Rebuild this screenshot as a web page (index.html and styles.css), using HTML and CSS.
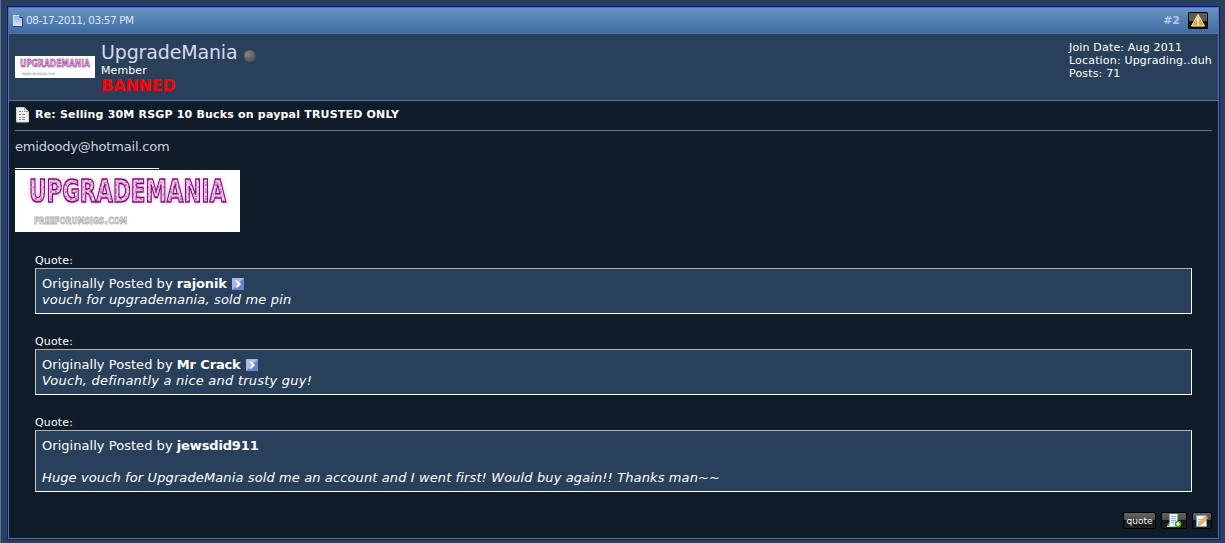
FILE: index.html
```html
<!DOCTYPE html>
<html lang="en">
<head>
<meta charset="UTF-8">
<meta name="viewport" content="width=device-width, initial-scale=1.0">
<title>Selling 30M RSGP 10 Bucks on paypal TRUSTED ONLY</title>
<link rel="stylesheet" href="styles.css">
</head>
<body>
<div class="post">

  <!-- Date and post number -->
  <div class="post-head">
    <svg class="icon-old" width="10" height="12" viewBox="0 0 10 12">
      <defs>
        <linearGradient id="page" x2="0" y2="1">
          <stop offset="0" stop-color="#8fa9df"/>
          <stop offset="1" stop-color="#dce5fb"/>
        </linearGradient>
      </defs>
      <path d="M0 0h7l2 2.500V11H0z" fill="url(#page)"/>
      <path d="M.5 11V.5h6" fill="none" stroke="#dfe8fb"/>
      <path d="M7 0v2.500h2.500V11.500H0" fill="none" stroke="#2b4078"/>
    </svg>
    <span class="date">08-17-2011, 03:57 PM</span>
    <span class="number">#<b>2</b></span>
    <svg class="icon-report" width="20" height="17" viewBox="0 0 20 17">
      <rect width="20" height="17" rx="1.500" fill="#000"/>
      <path d="M1 1h18v8H1z" fill="#5c5c5c"/>
      <path d="M1 9h18v7H1z" fill="#151515"/>
      <path d="M10 2.500L16.500 14h-13z" fill="#dfa63a" stroke="#fff0bd" stroke-linejoin="round"/>
      <path d="M10 5.500v5M10 11.500v1.500" stroke="#fffbe8" stroke-width="1.800"/>
    </svg>
  </div>

  <!-- User info -->
  <div class="user">
    <svg class="avatar" viewBox="0 0 225 62" preserveAspectRatio="none">
      <rect width="225" height="62" fill="#fff"/>
      <text class="sig-name" x="14" y="32" textLength="197" lengthAdjust="spacingAndGlyphs">UPGRADEMANIA</text>
      <text class="sig-site" x="19" y="54" textLength="93" lengthAdjust="spacingAndGlyphs">freeforumsigs.com</text>
    </svg>
    <div class="user-name">
      <div class="name"><span class="name-text">UpgradeMania</span><span class="offline"></span></div>
      <div class="rank">Member</div>
      <div class="banned">BANNED</div>
    </div>
    <div class="user-stats">
      <div>Join Date: Aug 2011</div>
      <div>Location: Upgrading..duh</div>
      <div>Posts: 71</div>
    </div>
  </div>

  <!-- Message -->
  <div class="message">
    <div class="title">
      <svg width="14" height="16" viewBox="0 0 14 16">
        <path d="M1.500.500h8l4 4v10.500h-12z" fill="#f1f1ec" stroke="#cfcfc9"/>
        <path d="M9.500.5v4h4z" fill="#fff" stroke="#a3a39e"/>
        <path d="M4 4.500h4M4 7.500h7M4 10.500h7M4 12.500h7" stroke="#85857f" stroke-dasharray="2 1 3 1"/>
      </svg>
      <span class="title-text">Re: Selling 30M RSGP 10 Bucks on paypal TRUSTED ONLY</span>
    </div>
    <div class="text">emidoody@hotmail.com</div>

    <div class="sig-line"></div>
    <svg class="signature" width="225" height="62" viewBox="0 0 225 62">
      <defs>
        <pattern id="speckle" width="5" height="7" patternUnits="userSpaceOnUse">
          <rect width="5" height="7" fill="#f3b3f3"/>
          <path d="M1 0v2M3 3h1M0 5h2" stroke="#9c3a90"/>
          <path d="M3 0v2M1 3v2" stroke="#fff"/>
        </pattern>
      </defs>
      <rect width="225" height="62" fill="#fff"/>
      <text class="sig-name glow" x="14" y="32" textLength="197" lengthAdjust="spacingAndGlyphs">UPGRADEMANIA</text>
      <text class="sig-site" x="19" y="54" textLength="93" lengthAdjust="spacingAndGlyphs">freeforumsigs.com</text>
    </svg>

    <div class="quote">
      <div class="quote-label">Quote:</div>
      <div class="quote-box">
        <div><span class="by">Originally Posted by <b>rajonik</b></span><svg class="view" width="12" height="12" viewBox="0 0 12 12"><rect width="12" height="12" fill="#6f84cf"/><path d="M0 12V0h12" fill="#a9b8e8"/><path d="M3 2.500h2.500L9 6 5.500 9.500H3L6 6z" fill="#fff"/></svg></div>
        <i class="q1">vouch for upgrademania, sold me pin</i>
      </div>
    </div>

    <div class="quote">
      <div class="quote-label">Quote:</div>
      <div class="quote-box">
        <div><span class="by">Originally Posted by <b>Mr Crack</b></span><svg class="view" width="12" height="12" viewBox="0 0 12 12"><rect width="12" height="12" fill="#6f84cf"/><path d="M0 12V0h12" fill="#a9b8e8"/><path d="M3 2.500h2.500L9 6 5.500 9.500H3L6 6z" fill="#fff"/></svg></div>
        <i class="q2">Vouch, definantly a nice and trusty guy!</i>
      </div>
    </div>

    <div class="quote">
      <div class="quote-label">Quote:</div>
      <div class="quote-box">
        <div><span class="by">Originally Posted by <b>jewsdid911</b></span></div>
        <br>
        <i class="q3">Huge vouch for UpgradeMania sold me an account and I went first! Would buy again!! Thanks man~~</i>
      </div>
    </div>

    <!-- Post controls -->
    <div class="controls">
      <span class="btn btn-quote">quote</span>
      <span class="btn btn-multi">
        <svg width="16" height="15" viewBox="0 0 16 15">
          <path d="M1 12l3-3v5H1z" fill="#55a867"/>
          <path d="M3.500 1h8v10l-1 2h-7z" fill="#e8f1fa"/>
          <path d="M5 3.500h5M5 5.500h5M5 7.500h5M5 9.500h3" stroke="#8db4dc"/>
          <path d="M1 13.500h10" stroke="#b8dbc0"/>
          <circle cx="12" cy="11" r="3.300" fill="#4ea32c"/>
          <path d="M12 9v4M10 11h4" stroke="#fff" stroke-width="1.200"/>
        </svg>
      </span>
      <span class="btn btn-edit">
        <svg width="14" height="14" viewBox="0 0 14 14">
          <path d="M1.500 1.500h10v11h-10z" fill="#eef5fd" stroke="#67a7dc"/>
          <path d="M3 5.500h4M3 7.500h3" stroke="#9cc4e6"/>
          <path d="M4 8.500L10 2.500l2.200 2.200-6 6-3 .8z" fill="#f3b552" stroke="#d58a2b" stroke-width=".6"/>
          <path d="M10 2.500l1-1 2 2-.9 1.200z" fill="#e9817b"/>
        </svg>
      </span>
    </div>
  </div>
</div>
</body>
</html>
```
FILE: styles.css
```css
* {
  box-sizing: border-box;
}

body {
  margin: 0;
  height: 543px;
  padding: 6px 5px 0 6px;
  border-left: 1px solid #5c7099;
  background-color: #29405a;
  color: #fff;
  font-family: "DejaVu Sans", Verdana, sans-serif;
  font-size: 13px;
  line-height: 16px;
  overflow: hidden;
}

svg {
  display: block;
  flex: none;
}

.post {
  height: 534px;
  border: 1px solid #0b198c;
  background-color: #0f1c2a;
  outline: 1px solid #5c7099;
  outline-offset: -2px;
  padding: 1px;
}

.post-head {
  display: flex;
  align-items: center;
  height: 26px;
  padding: 0 10px 0 4px;
  border-bottom: 1px solid #5c7099;
  background: linear-gradient(#6793c1, #3e6ca2);
  color: #dde5f2;
  font-size: 11px;
}

.icon-old {
  margin-top: 1px;
}

.date {
  margin: -2px auto 0 3px;
  font-size: 10.500px;
  letter-spacing: -0.45px;
}

.number {
  margin-right: 8px;
  color: #d4d4fb;
}

.number b {
  color: #c1bdf5;
}

.user {
  display: flex;
  height: 67px;
  padding: 6px;
  border-bottom: 1px solid #5c7099;
  background-color: #29405a;
}

.avatar {
  width: 80px;
  height: 22px;
  margin: 16px 6px 0 0;
}

.name {
  display: flex;
  height: 24px;
  color: #d8d8ee;
  font-size: 19px;
  line-height: 24px;
  letter-spacing: -0.15px;
}

.offline {
  width: 12px;
  height: 12px;
  margin: 10px 0 0 7px;
  border-radius: 50%;
  background: radial-gradient(circle at 4px 4px, #858585, #3c3c3c);
}

.rank {
  height: 13px;
  font-size: 11px;
  line-height: 13px;
  letter-spacing: 0.1px;
}

.banned {
  color: #f00;
  font-size: 16px;
  font-weight: bold;
  line-height: 17px;
  letter-spacing: -0.2px;
}

.user-stats {
  margin: 1px 0 0 auto;
  font-size: 11px;
  line-height: 13px;
  letter-spacing: 0.17px;
}

.message {
  padding: 6px;
}

.title {
  display: flex;
  height: 24px;
  border-bottom: 1px solid #5c7099;
  font-size: 11px;
  font-weight: bold;
}

.title-text {
  margin-left: 6px;
  line-height: 15px;
  letter-spacing: 0.19px;
}

.text {
  margin-top: 8px;
  color: #d1d1e1;
  letter-spacing: -0.2px;
}

.sig-line {
  width: 144px;
  height: 1px;
  margin: 13px 0 1px;
  background-color: #fff;
}

.sig-name {
  fill: url(#speckle);
  stroke: #75145f;
  stroke-width: 1.500px;
  font: bold 32px "DejaVu Sans", sans-serif;
}

.glow {
  filter: drop-shadow(0 0 2px #f3bdf3);
}

.sig-site {
  fill: #fff;
  stroke: #b0b0b0;
  stroke-width: 0.800px;
  font: bold small-caps 12px "DejaVu Sans", sans-serif;
}

.quote {
  margin: 20px 20px 0;
}

.quote + .quote {
  margin-top: 19px;
}

.quote-label {
  height: 16px;
  font-size: 11px;
  line-height: 17px;
  letter-spacing: 0.15px;
}

.quote-box {
  padding: 7px 6px 5px;
  border: 1px solid #fff;
  border-top-color: #b0b0b0;
  border-left-color: #c4c4c4;
  background-color: #29405a;
}

.quote-box > div {
  display: flex;
}

.quote-box i {
  display: block;
}

.by {
  letter-spacing: 0.04px;
}

.by b {
  letter-spacing: -0.15px;
}

.q1 {
  letter-spacing: 0.15px;
}

.q2 {
  letter-spacing: 0.23px;
}

.q3 {
  letter-spacing: 0.115px;
}

.view {
  margin: 2px 0 0 5px;
}

.controls {
  display: flex;
  justify-content: flex-end;
  gap: 5px;
  margin-top: 20px;
}

.btn {
  display: flex;
  align-items: center;
  justify-content: center;
  height: 17px;
  border: 1px solid #000;
  border-radius: 2px;
  background: linear-gradient(#666, #4a4a4a 50%, #161616 50%, #222);
}

.btn-quote {
  width: 33px;
  font-size: 9px;
}

.btn-multi {
  width: 26px;
}

.btn-edit {
  width: 20px;
}
```
